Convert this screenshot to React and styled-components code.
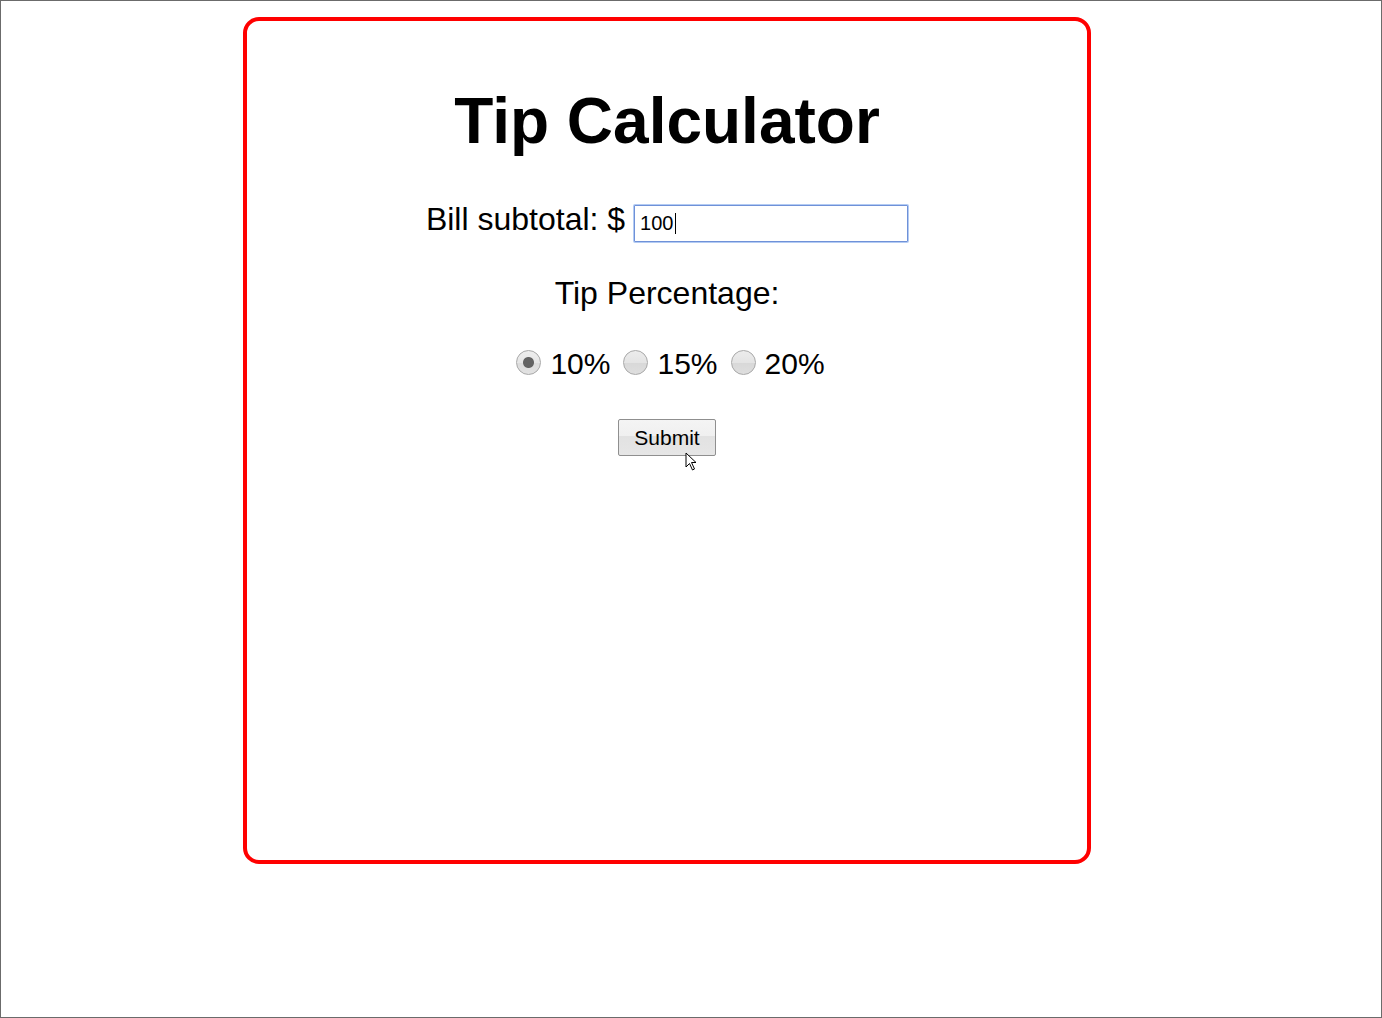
import styled, { createGlobalStyle } from 'styled-components';

const GlobalStyle = createGlobalStyle`
  html, body {
    margin: 0;
    padding: 0;
    background: #ffffff;
  }
  body {
    font-family: "Liberation Sans", Arial, sans-serif;
    color: #000;
  }
`;

const Frame = styled.div`
  box-sizing: border-box;
  width: 1382px;
  height: 1018px;
  border: 1px solid #6b6b6b;
  padding: 16px 0 0 242px;
`;

const Card = styled.div`
  box-sizing: border-box;
  width: 848px;
  height: 847px;
  border: 4px solid #ff0000;
  border-radius: 16px;
  padding-top: 63px;
  display: flex;
  flex-direction: column;
  align-items: center;
`;

const Title = styled.h1`
  margin: 0;
  font-size: 64px;
  line-height: 74px;
  font-weight: bold;
`;

const Label = styled.span`
  font-size: ${(p) => p.$size || 32}px;
  line-height: 34px;
  white-space: nowrap;
`;

const BillRow = styled.div`
  display: flex;
  align-items: flex-start;
  gap: 9px;
  margin-top: 44px;
`;

const InputWrap = styled.div`
  position: relative;
  margin-top: 3px;
`;

const AmountInput = styled.input`
  box-sizing: border-box;
  width: 274px;
  height: 37px;
  padding: 0 5px;
  font-family: "Liberation Sans", Arial, sans-serif;
  font-size: 20px;
  color: #000;
  border: 1px solid #6f91d8;
  box-shadow: 0 0 0 1px #b3cbf3;
  border-radius: 1px;
  outline: none;
`;

const Caret = styled.span`
  position: absolute;
  left: 41px;
  top: 8px;
  width: 1px;
  height: 21px;
  background: #000;
`;

const SectionLabel = styled(Label)`
  display: block;
  margin-top: 34px;
`;

const RadioRow = styled.div`
  display: flex;
  align-items: center;
  gap: 13px;
  margin-top: 37px;
  padding-left: 7px;
`;

const Option = styled.label`
  display: flex;
  align-items: center;
  gap: 9px;
`;

const Radio = styled.input.attrs({ type: 'radio' })`
  appearance: none;
  -webkit-appearance: none;
  box-sizing: border-box;
  width: 25px;
  height: 25px;
  margin: -3px 0 0 0;
  border: 1px solid #a8a8a8;
  border-radius: 50%;
  background: linear-gradient(#ececec 0%, #e4e4e4 50%, #d8d8d8 51%, #dedede 100%);

  &:checked {
    background:
      radial-gradient(circle, #636363 0 5px, transparent 6px),
      linear-gradient(#eeeeee 0%, #e6e6e6 50%, #dcdcdc 51%, #e2e2e2 100%);
  }
`;

const SubmitButton = styled.button`
  box-sizing: border-box;
  width: 98px;
  height: 37px;
  margin-top: 38px;
  font-family: "Liberation Sans", Arial, sans-serif;
  font-size: 21px;
  color: #000;
  border: 1px solid #8f8f8f;
  border-radius: 2px;
  background: linear-gradient(#f4f4f4 0%, #f0f0f0 45%, #e2e2e2 46%, #e6e6e6 100%);
  padding: 0;
`;

const ButtonWrap = styled.div`
  position: relative;
`;

const Pointer = styled.svg`
  position: absolute;
  left: 67px;
  top: 71px;
`;

const tips = [
  { value: '10', checked: true },
  { value: '15' },
  { value: '20' },
];

export default function App() {
  return (
    <>
      <GlobalStyle />
      <Frame>
        <Card>
          <Title>Tip Calculator</Title>
          <BillRow>
            <Label>Bill subtotal: $</Label>
            <InputWrap>
              <AmountInput type="text" defaultValue="100" />
              <Caret />
            </InputWrap>
          </BillRow>
          <SectionLabel>Tip Percentage:</SectionLabel>
          <RadioRow>
            {tips.map((t) => (
              <Option key={t.value}>
                <Radio name="tip" value={t.value} defaultChecked={t.checked} />
                <Label $size={30}>{t.value}%</Label>
              </Option>
            ))}
          </RadioRow>
          <ButtonWrap>
            <SubmitButton type="button">Submit</SubmitButton>
            <Pointer width="14" height="20" viewBox="0 0 14 20">
              <path d="M1 1 L1 15 L4.5 11.5 L7.5 18 L9.5 17 L6.5 10.5 L11 10.5 Z" fill="#fff" stroke="#000" strokeWidth="1" />
            </Pointer>
          </ButtonWrap>
        </Card>
      </Frame>
    </>
  );
}
